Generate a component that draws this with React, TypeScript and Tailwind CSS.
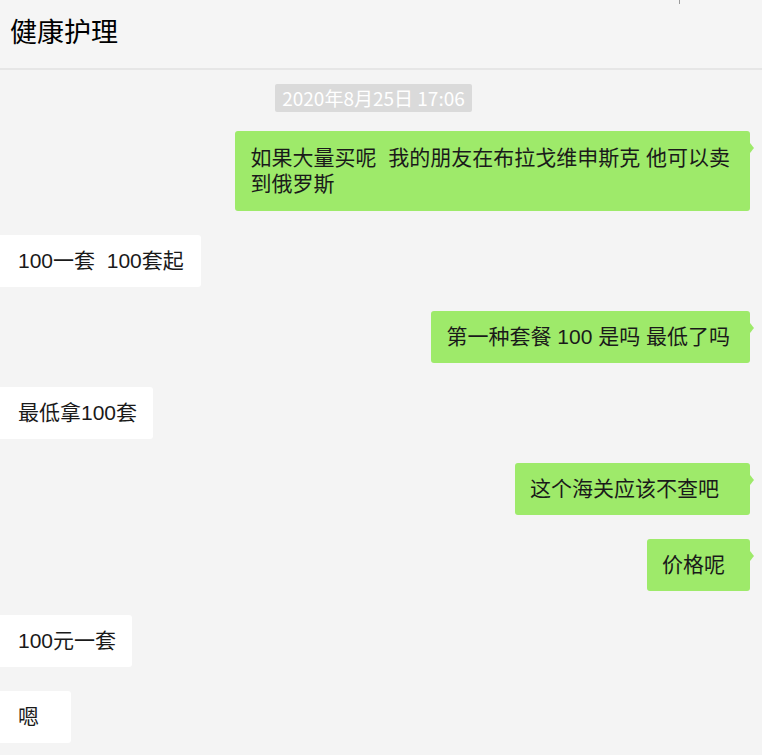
import React from 'react';

type Msg = { side: 'left' | 'right'; text: React.ReactNode; tall?: boolean; pad?: string };

const messages: Msg[] = [
  {
    side: 'right',
    tall: true,
    text: (
      <>
        如果大量买呢  我的朋友在布拉戈维申斯克 他可以卖
        <br />
        到俄罗斯
      </>
    ),
  },
  { side: 'left', text: '100一套  100套起', pad: 'pr-[17px]' },
  { side: 'right', text: '第一种套餐 100 是吗 最低了吗' },
  { side: 'left', text: '最低拿100套', pad: 'pr-[16px]' },
  { side: 'right', text: '这个海关应该不查吧', pad: 'pr-[31px]' },
  { side: 'right', text: '价格呢', pad: 'pr-[25px]' },
  { side: 'left', text: '100元一套', pad: 'pr-[16px]' },
  { side: 'left', text: '嗯', pad: 'pr-[32px]' },
];

function Bubble({ msg }: { msg: Msg }) {
  if (msg.side === 'right') {
    return (
      <div className="self-end mr-[12px] relative">
        <div
          className={`bg-[#9eea6a] rounded-[3px] pl-[15px] text-[21px] leading-[26px] text-[#1a1a1a] whitespace-pre-wrap ${
            msg.pad ?? 'pr-[20px]'
          } ${msg.tall ? 'py-[14px]' : 'py-[13px]'}`}
        >
          {msg.text}
        </div>
        {/* tail */}
        <span className="absolute -right-[4px] top-[12px] w-0 h-0 border-y-[5px] border-y-transparent border-l-[4px] border-l-[#9eea6a]" />
      </div>
    );
  }
  return (
    <div className="self-start">
      <div
        className={`bg-white rounded-r-[3px] pl-[18px] py-[13px] text-[21px] leading-[26px] text-[#1a1a1a] whitespace-pre-wrap ${
          msg.pad ?? 'pr-[15px]'
        }`}
      >
        {msg.text}
      </div>
    </div>
  );
}

export default function App() {
  return (
    <div
      className="relative min-h-screen bg-[#f4f4f4] overflow-hidden"
      style={{ fontFamily: '"Liberation Sans", "Noto Sans CJK SC", sans-serif' }}
    >
      {/* window separator tick */}
      <span className="absolute left-[679px] top-0 w-px h-[4px] bg-[#9a9a9a]" />

      {/* Header */}
      <div className="h-[70px] bg-[#f5f5f5] border-b-2 border-[#e6e6e6] flex items-center pl-[10px]">
        <h1 className="text-[27px] text-black font-normal leading-none -mt-[2px]">健康护理</h1>
      </div>

      {/* Chat */}
      <div className="flex justify-center pr-[15px] mt-[14px]">
        <span
          className="bg-[#dadada] text-white text-[19px] leading-[28px] px-[7px] rounded-[2px]"
          style={{ fontFamily: '"Noto Sans CJK SC", sans-serif' }}
        >
          2020年8月25日 17:06
        </span>
      </div>

      <div className="flex flex-col gap-6 mt-[19px] pb-6">
        {messages.map((m, i) => (
          <Bubble key={i} msg={m} />
        ))}
      </div>
    </div>
  );
}
